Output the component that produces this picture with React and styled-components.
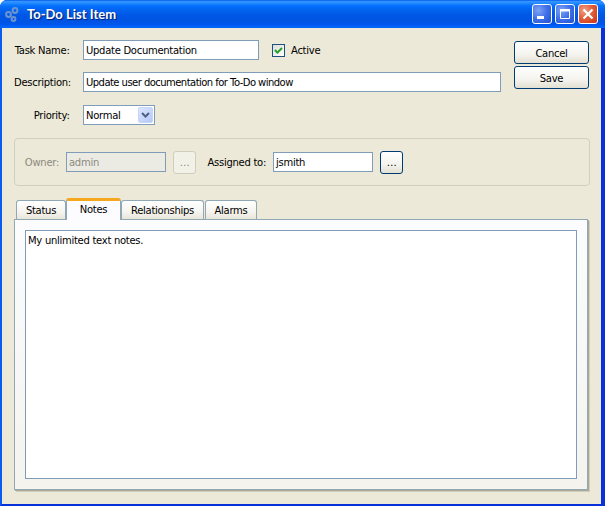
import React from 'react';
import styled, { createGlobalStyle } from 'styled-components';

const Global = createGlobalStyle`
  html, body { margin: 0; padding: 0; background: #fff; }
  body { font-family: "DejaVu Sans", Tahoma, sans-serif; font-size: 10px; letter-spacing: -0.28px; color: #000; }
  #root { width: 605px; height: 506px; }
`;
const Win = styled.div`
  width: 605px; height: 506px; display: flex; flex-direction: column; box-sizing: border-box; overflow: hidden;
  border-radius: 7px 7px 0 0;
  background: #0831d9;
`;
const TitleBar = styled.div`
  height: 28px; flex: none; display: flex; align-items: center; padding: 0 7px 0 4px;
  background: linear-gradient(180deg, #0058ee 0%, #3593ff 5%, #288eff 10%, #127dff 16%, #036ffc 22%, #0262ee 38%, #0057e5 55%, #0054e3 75%, #0055eb 86%, #005bf5 92%, #026afe 96%, #0062ef 100%);
`;
const AppIcon = styled.svg`width: 18px; height: 18px; flex: none; margin-right: 5px;`;
const Title = styled.div`
  flex: 1; color: #fff; font: bold 13px "Lato", sans-serif; letter-spacing: 0;
  text-shadow: 1px 1px 1px #0a1f6e;
`;
const WinButtons = styled.div`display: flex; gap: 3px;`;
const WinButton = styled.div`
  width: 20px; height: 20px; box-sizing: border-box; border: 1px solid #fff; border-radius: 3px;
  display: flex; align-items: center; justify-content: center;
  background: ${p => p.$close
    ? 'radial-gradient(circle at 30% 30%, #f0a08a 0%, #e2603c 45%, #c8300f 100%)'
    : 'radial-gradient(circle at 30% 30%, #7ea3f4 0%, #3e6fe8 50%, #2450d0 100%)'};
`;
const Body = styled.div`
  flex: 1; min-height: 0; display: flex; flex-direction: column; background: #ece9d8; box-sizing: border-box;
  border-left: 2px solid #0a5cf0; border-right: 4px solid #0831d9; border-bottom: 2px solid #0831d9;
  padding: 12px 11px 14px 12px;
`;
const Top = styled.div`display: flex; justify-content: space-between;`;
const Fields = styled.div`display: flex; flex-direction: column; flex: 1;`;
const Row = styled.div`display: flex; align-items: center; height: 20px; margin-bottom: ${p => p.$mb || 0}px;`;
const Label = styled.label`width: 56px; margin-right: 13px; padding-right: 0.5px; box-sizing: border-box; text-align: right; white-space: nowrap; flex: none;`;
const Input = styled.div`
  box-sizing: border-box; height: 20px; width: ${p => p.$w}px; flex: none; display: flex; align-items: center;
  padding-left: 2px; border: 1px solid #7f9db9; white-space: nowrap;
  letter-spacing: ${p => p.$tight ? '-0.54px' : 'inherit'};
  background: ${p => p.$disabled ? '#ebebe4' : '#fff'}; color: ${p => p.$disabled ? '#8c8a7d' : '#000'};
`;
const Check = styled.div`
  margin-left: 13px; display: flex; align-items: center; gap: 6px;
`;
const CheckBox = styled.div`
  width: 13px; height: 13px; box-sizing: border-box; border: 1px solid #1c5180; background: linear-gradient(135deg, #dcdcd7, #fff);
  display: flex; align-items: center; justify-content: center;
`;
const Select = styled.div`
  box-sizing: border-box; width: 72px; height: 20px; border: 1px solid #7f9db9; background: #fff; display: flex; align-items: center; padding: 0 1px 0 2px; justify-content: space-between;
`;
const SelectArrow = styled.div`
  width: 15px; height: 16px; border-radius: 2px; background: linear-gradient(135deg, #dde6fd, #b3c8f8);
  border: 1px solid #c6d5f9; box-sizing: border-box; display: flex; align-items: center; justify-content: center;
`;
const Actions = styled.div`display: flex; flex-direction: column; gap: 2px; margin: 1px 1px 0 0;`;
const Button = styled.div`
  box-sizing: border-box; width: 75px; height: 23px; border: 1px solid #003c74; border-radius: 3px; padding-top: 1px;
  display: flex; align-items: center; justify-content: center;
  background: linear-gradient(180deg, #fff 0%, #f4f3ee 60%, #e3e0d2 100%);
`;
const Group = styled.div`
  box-sizing: border-box; height: 48px; margin-top: 13px; border: 1px solid #d0d0bf; border-radius: 4px; display: flex; align-items: center;
`;
const GroupLabel = styled.span`
  flex: none; width: ${p => p.$w}px; text-align: right; margin-right: 7px; margin-left: ${p => p.$ml || 0}px; white-space: nowrap;
  color: ${p => p.$disabled ? '#8c8a7d' : '#000'};
`;
const Dots = styled.div`
  box-sizing: border-box; width: 23px; height: 23px; margin-left: 7px; border-radius: 3px; flex: none;
  border: 1px solid ${p => p.$disabled ? '#cfcdbd' : '#003c74'};
  color: ${p => p.$disabled ? '#8c8a7d' : '#000'};
  background: ${p => p.$disabled ? '#f2f1e8' : 'linear-gradient(180deg, #fff 0%, #f4f3ee 60%, #e3e0d2 100%)'};
  display: flex; align-items: center; justify-content: center;
`;
const Tabs = styled.div`display: flex; margin: 12px 0 0 2px; height: 21px; align-items: flex-end; position: relative; z-index: 1;`;
const Tab = styled.div`
  box-sizing: border-box; display: flex; align-items: center; justify-content: center; width: ${p => p.$w}px; margin-left: ${p => p.$ml || 0}px;
  ${p => p.$active ? `
    height: 22px; margin-bottom: -1px; background: #fcfcfe; border: 1px solid #91a7b4; border-bottom: none; border-top: 3px solid #f5a81e; border-radius: 3px 3px 0 0; padding-bottom: 2px;
  ` : `
    height: 19px; background: linear-gradient(180deg, #fff 0%, #f5f4ee 60%, #e8e6d9 100%); border: 1px solid #91a7b4; border-bottom: none; border-radius: 3px 3px 0 0;
  `}
`;
const Panel = styled.div`
  flex: 1; min-height: 0; display: flex; box-sizing: border-box; border: 1px solid #91a7b4; padding: 10px; margin-right: 2px;
  background: linear-gradient(180deg, #fcfcfe 0%, #f4f3ee 100%); box-shadow: 1px 1px 0 #aca899, 2px 2px 0 #d0cdbd;
`;
const Area = styled.div`flex: 1; background: #fff; border: 1px solid #7f9db9; padding: 4px 2px;`;

export default function App() {
  return (
    <>
      <Global />
      <Win>
        <TitleBar>
          <AppIcon viewBox="0 0 18 18">
            <g fill="none" stroke="#6c95cf" strokeWidth="2">
              <circle cx="4.5" cy="9.5" r="2.4" /><circle cx="11" cy="5.5" r="2.4" /><circle cx="9.5" cy="14" r="1.9" />
            </g>
          </AppIcon>
          <Title>To-Do List Item</Title>
          <WinButtons>
            <WinButton><svg width="14" height="14" viewBox="0 0 14 14"><rect x="2" y="9" width="7" height="3" fill="#fff" /></svg></WinButton>
            <WinButton><svg width="14" height="14" viewBox="0 0 14 14"><path d="M2.5 2.5h9v9h-9z" fill="none" stroke="#fff" strokeWidth="1" /><rect x="2" y="2" width="10" height="2.5" fill="#fff" /></svg></WinButton>
            <WinButton $close><svg width="14" height="14" viewBox="0 0 14 14"><path d="M2.5 2.5l9 9M11.5 2.5l-9 9" stroke="#fff" strokeWidth="2.2" /></svg></WinButton>
          </WinButtons>
        </TitleBar>
        <Body>
          <Top>
            <Fields>
              <Row $mb={12}>
                <Label>Task Name:</Label>
                <Input $w={176}>Update Documentation</Input>
                <Check>
                  <CheckBox><svg width="11" height="11" viewBox="0 0 11 11"><path d="M2 5l2.4 2.6L9 3" fill="none" stroke="#21a121" strokeWidth="2" /></svg></CheckBox>
                  Active
                </Check>
              </Row>
              <Row $mb={13}>
                <Label>Description:</Label>
                <Input $w={418} $tight>Update user documentation for To-Do window</Input>
              </Row>
              <Row>
                <Label>Priority:</Label>
                <Select>Normal<SelectArrow><svg width="9" height="7" viewBox="0 0 9 7"><path d="M1 1l3.5 3.5L8 1" fill="none" stroke="#4d6185" strokeWidth="2" /></svg></SelectArrow></Select>
              </Row>
            </Fields>
            <Actions>
              <Button>Cancel</Button>
              <Button>Save</Button>
            </Actions>
          </Top>
          <Group>
            <GroupLabel $w={44} $disabled>Owner:</GroupLabel>
            <Input $w={100} $disabled>admin</Input>
            <Dots $disabled>…</Dots>
            <GroupLabel $w={60} $ml={10}>Assigned to:</GroupLabel>
            <Input $w={100}>jsmith</Input>
            <Dots>…</Dots>
          </Group>
          <Tabs>
            <Tab $w={50}>Status</Tab>
            <Tab $w={55} $active>Notes</Tab>
            <Tab $w={83}>Relationships</Tab>
            <Tab $w={52} $ml={1}>Alarms</Tab>
          </Tabs>
          <Panel><Area>My unlimited text notes.</Area></Panel>
        </Body>
      </Win>
    </>
  );
}
